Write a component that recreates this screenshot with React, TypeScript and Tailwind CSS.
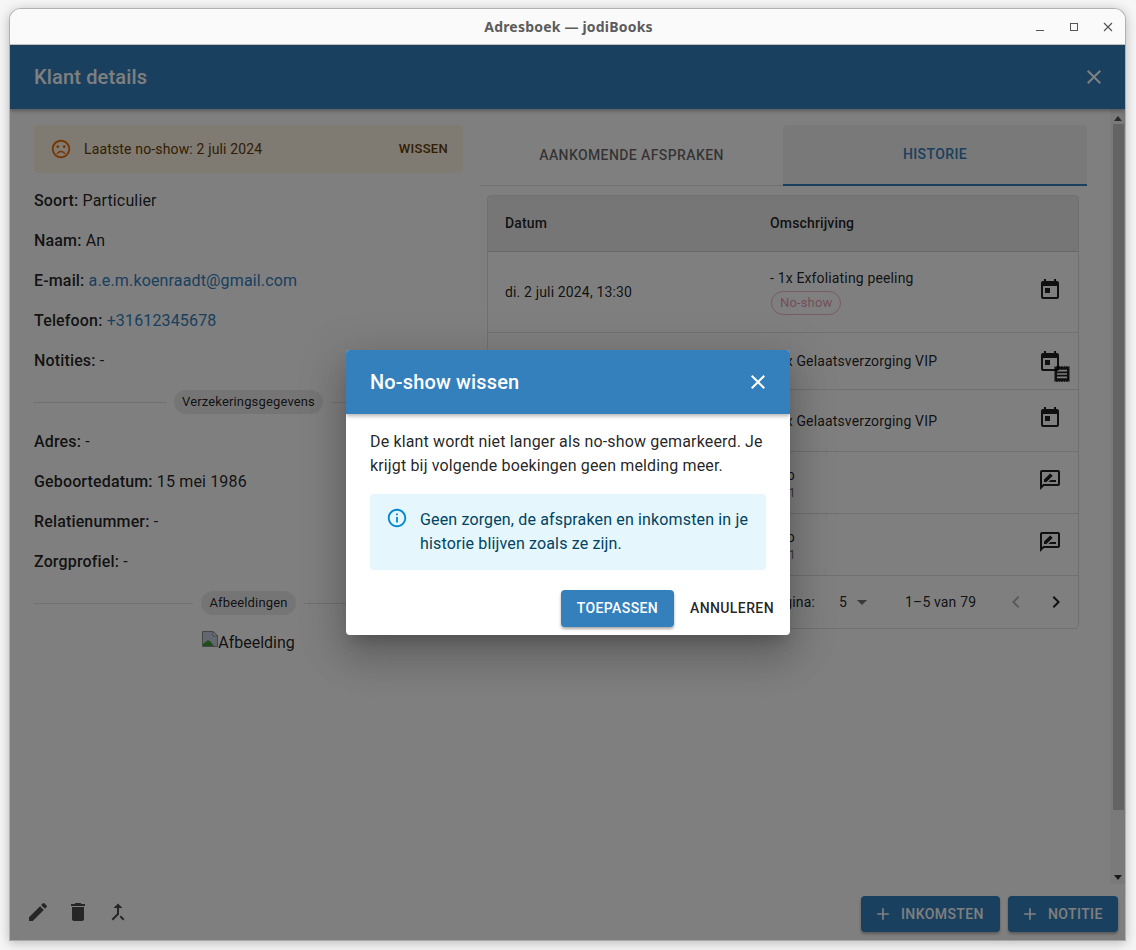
import React from 'react'

const paths = {
	today: 'M19 3h-1V1h-2v2H8V1H6v2H5c-1.11 0-1.99.9-1.99 2L3 19c0 1.1.89 2 2 2h14c1.1 0 2-.9 2-2V5c0-1.1-.9-2-2-2zm0 16H5V8h14v11zM7 10h5v5H7z',
	receipt: 'M18 17H6v-2h12v2zm0-4H6v-2h12v2zm0-4H6V7h12v2zM3 22l1.5-1.5L6 22l1.5-1.5L9 22l1.5-1.5L12 22l1.5-1.5L15 22l1.5-1.5L18 22l1.5-1.5L21 22V2l-1.5 1.5L18 2l-1.5 1.5L15 2l-1.5 1.5L12 2l-1.5 1.5L9 2 7.5 3.5 6 2 4.5 3.5 3 2v20z',
	review: 'M20 2H4c-1.1 0-2 .9-2 2v18l4-4h14c1.1 0 2-.9 2-2V4c0-1.1-.9-2-2-2zm0 14H5.17l-.59.59-.58.58V4h16v12zm-9.5-2H18v-2h-5.5zm3.86-5.87c.2-.2.2-.51 0-.71l-1.77-1.77c-.2-.2-.51-.2-.71 0L6 11.53V14h2.47l5.89-5.87z',
	edit: 'M3 17.25V21h3.75L17.81 9.94l-3.75-3.75L3 17.25zM20.71 7.04c.39-.39.39-1.02 0-1.41l-2.34-2.34a.9959.9959 0 0 0-1.41 0l-1.83 1.83 3.75 3.75 1.83-1.83z',
	trash: 'M6 19c0 1.1.9 2 2 2h8c1.1 0 2-.9 2-2V7H6v12zM19 4h-3.5l-1-1h-5l-1 1H5v2h14V4z',
	merge: 'M17 20.41 18.41 19 15 15.59 13.59 17 17 20.41zM7.5 8H11v5.59L5.59 19 7 20.41l6-6V8h3.5L12 3.5 7.5 8z',
	close: 'M19 6.41 17.59 5 12 10.59 6.41 5 5 6.41 10.59 12 5 17.59 6.41 19 12 13.41 17.59 19 19 17.59 13.41 12z',
	add: 'M19 13h-6v6h-2v-6H5v-2h6V5h2v6h6v2z',
	left: 'M15.41 7.41 14 6l-6 6 6 6 1.41-1.41L10.83 12z',
	right: 'M10 6 8.59 7.41 13.17 12l-4.58 4.59L10 18l6-6z',
	drop: 'M7 10l5 5 5-5z',
	sad: 'M12 14c-2.33 0-4.32 1.45-5.12 3.5h1.67c.69-1.19 1.97-2 3.45-2s2.75.81 3.45 2h1.67c-.8-2.05-2.79-3.5-5.12-3.5zm-.01-12C6.47 2 2 6.48 2 12s4.47 10 9.99 10C17.52 22 22 17.52 22 12S17.52 2 11.99 2zM12 20c-4.42 0-8-3.58-8-8s3.58-8 8-8 8 3.58 8 8-3.58 8-8 8zM15.5 8a1.5 1.5 0 1 0 0 3 1.5 1.5 0 0 0 0-3zM8.5 8a1.5 1.5 0 1 0 0 3 1.5 1.5 0 0 0 0-3z',
	info: 'M11 7h2v2h-2zm0 4h2v6h-2zm1-9C6.48 2 2 6.48 2 12s4.48 10 10 10 10-4.48 10-10S17.52 2 12 2zm0 18c-4.41 0-8-3.59-8-8s3.59-8 8-8 8 3.59 8 8-3.59 8-8 8z',
}

const Icon = ({ name, className }: { name: keyof typeof paths; className?: string }) => (
	<svg viewBox="0 0 24 24" fill="currentColor" className={className}>
		<path d={paths[name]} />
	</svg>
)

const Field = ({ label, value, link }: { label: string; value: string; link?: boolean }) => (
	<div className="h-6 mb-4 text-[16px] leading-6 tracking-[0.15px] text-black/[0.87] whitespace-nowrap">
		<span className="font-medium">{label}:</span>{' '}
		<span className={link ? 'text-[#3380bd]' : ''}>{value}</span>
	</div>
)

const Divider = ({ label }: { label: string }) => (
	<div className="pt-px mb-4">
		<div className="flex items-center gap-2 h-6">
			<div className="flex-1 h-px bg-black/[0.12]" />
			<div className="h-6 px-2 rounded-full bg-black/[0.08] text-[13px] leading-6 text-black/[0.87] tracking-[0.15px]">{label}</div>
			<div className="flex-1 h-px bg-black/[0.12]" />
		</div>
	</div>
)

const rows = [
	{ h: 'h-[81px]', icoY: '-mt-[4px]', date: 'di. 2 juli 2024, 13:30', desc: '- 1x Exfoliating peeling', chip: true, icon: 'today' },
	{ h: 'h-[57px]', icoY: 'mt-[1px]', date: 'di. 18 juni 2024, 10:00', desc: '- 1x Gelaatsverzorging VIP', icon: 'both' },
	{ h: 'h-[62px]', icoY: '-mt-[6px]', date: 'di. 4 juni 2024, 10:00', desc: '- 1x Gelaatsverzorging VIP', icon: 'today' },
	{ h: 'h-[62px] pt-px', icoY: '-mt-[7px]', date: 'ma. 3 juni 2024, 09:12', desc: 'Info', sub: 'Nr. 1', icon: 'review' },
	{ h: 'h-[62px] pt-px', icoY: '-mt-[7px]', date: 'ma. 3 juni 2024, 09:10', desc: 'Info', sub: 'Nr. 1', icon: 'review' },
]

export default function App() {
	return (
		<div className="w-[1136px] h-[950px] pt-2 pl-[9px] pr-[10px] pb-[9px] bg-[#f6f6f6] overflow-hidden" style={{ fontFamily: 'Roboto, sans-serif' }}>
			<div className="relative h-full flex flex-col rounded-t-[12px] overflow-hidden border border-[#b0b0b0] border-b-[#a8a8a8] bg-white shadow-[0_2px_12px_rgba(0,0,0,0.25)]">
				{/* title bar */}
				<div className="relative flex-none h-[36px] pl-[2px] bg-[#fafafa] border-b border-[#c8c8c8] flex items-center justify-center">
					<span className="text-[14px] font-bold tracking-[0.2px] text-[#5c5c5c]" style={{ fontFamily: '"Noto Sans", sans-serif' }}>Adresboek — jodiBooks</span>
					<div className="absolute right-0 top-0 h-full flex items-center text-[#555]">
						<div className="w-[34px] flex justify-center"><div className="w-2 h-px mt-[8px] bg-[#555]" /></div>
						<div className="w-[34px] flex justify-center"><div className="w-2 h-2 border border-[#555]" /></div>
						<div className="w-[34px] flex justify-center">
							<svg viewBox="0 0 10 10" className="w-[10px] h-[10px]" stroke="#555" strokeWidth="1.2"><path d="M1 1l8 8M9 1l-8 8" /></svg>
						</div>
					</div>
				</div>

				<div className="relative flex-1 min-h-0 flex flex-col">
					{/* app bar */}
					<div className="flex-none h-[64px] bg-[#3380bd] pl-6 pr-[19px] flex items-center justify-between shadow-[0_2px_4px_rgba(0,0,0,0.3)] z-10 text-white">
						<span className="text-[20px] font-medium tracking-[0.15px]">Klant details</span>
						<Icon name="close" className="w-6 h-6" />
					</div>

					<div className="flex-1 min-h-0 flex bg-white">
						{/* content */}
						<div className="flex-1 min-w-0 pt-4 pl-6 pr-4 flex gap-[17px]">
							<div className="w-[429px] flex-none">
								<div className="h-12 mb-4 rounded bg-[#fff4e5] pl-4 pr-[15px] flex items-center text-[#663c00]">
									<Icon name="sad" className="w-[22px] h-[22px] text-[#ed6c02]" />
									<span className="ml-[12px] text-[14px] tracking-[0.15px]">Laatste no-show: 2 juli 2024</span>
									<span className="ml-auto text-[13px] font-medium tracking-[0.3px]">WISSEN</span>
								</div>
								<Field label="Soort" value="Particulier" />
								<Field label="Naam" value="An" />
								<Field label="E-mail" value="a.e.m.koenraadt@gmail.com" link />
								<Field label="Telefoon" value="+31612345678" link />
								<Field label="Notities" value="-" />
								<Divider label="Verzekeringsgegevens" />
								<Field label="Adres" value="-" />
								<Field label="Geboortedatum" value="15 mei 1986" />
								<Field label="Relatienummer" value="-" />
								<Field label="Zorgprofiel" value="-" />
								<Divider label="Afbeeldingen" />
								<div className="flex justify-center items-start h-6 text-[16px] leading-6 text-black/[0.87]">
									<svg viewBox="0 0 16 16" className="w-4 h-4">
										<path d="M.5.5h10.5l4.5 4.5v10.5H.5z" fill="#c4cfe0" stroke="#8a8a8a" />
										<path d="M11 .5v4.5h4.5z" fill="#fff" stroke="#8a8a8a" />
										<path d="M1 15v-2l5-4 3 2 3 4z" fill="#3f9a3a" />
									</svg>
									<span>Afbeelding</span>
								</div>
							</div>

							<div className="w-[607px] flex-none">
								<div className="flex h-[61px] border-b border-black/[0.12]">
									<div className="w-[303px] flex items-center justify-center text-[14px] font-medium tracking-[0.4px] text-black/60">AANKOMENDE AFSPRAKEN</div>
									<div className="w-[304px] flex items-center justify-center text-[14px] font-medium tracking-[0.4px] text-[#3380bd] bg-black/[0.05] rounded-t border-b-2 border-[#3380bd] h-[61px]">HISTORIE</div>
								</div>
								<div className="mt-[9px] ml-[7px] w-[592px] border border-black/[0.12] rounded overflow-hidden">
									<div className="h-[56px] bg-black/[0.07] border-b border-black/[0.12] flex items-center text-[14px] font-medium text-black/[0.87] tracking-[0.15px]">
										<div className="w-[282px] pl-[17px] flex-none">Datum</div>
										<div>Omschrijving</div>
									</div>
									{rows.map((r, i) => (
										<div key={i} className={`${r.h} border-b border-black/[0.12] flex items-center text-[14px] text-black/[0.87] tracking-[0.15px]`}>
											<div className="w-[282px] pl-[17px] flex-none">{r.date}</div>
											<div className={`flex-1 min-w-0 ${r.chip ? 'pb-px' : ''}`}>
												<div className="leading-5">{r.desc}</div>
												{r.chip && (
													<div className="mt-[3px] ml-px w-fit h-6 px-2 rounded-full border border-[#d32f5f]/35 text-[13px] leading-[22px] text-[#d32f5f]/50">No-show</div>
												)}
												{r.sub && <div className="text-[12px] leading-4 text-black/60">{r.sub}</div>}
											</div>
											<div className={`relative w-6 h-6 mr-4 flex-none ${r.icoY}`}>
												{r.icon === 'review' ? <Icon name="review" className="w-6 h-6" /> : <Icon name="today" className="w-6 h-6" />}
												{r.icon === 'both' && <Icon name="receipt" className="absolute left-[14px] top-[14px] w-5 h-5" />}
											</div>
										</div>
									))}
									<div className="h-[52px] flex items-center text-[14px] text-black/[0.87] tracking-[0.15px]">
										<div className="w-[327px] text-right flex-none whitespace-nowrap">Rijen per pagina:</div>
										<span className="ml-6">5</span>
										<Icon name="drop" className="ml-[3px] w-6 h-6 text-black/55" />
										<span className="ml-[31px] w-[71px] whitespace-nowrap">1–5 van 79</span>
										<Icon name="left" className="ml-[28px] w-6 h-6 text-black/30" />
										<Icon name="right" className="ml-4 w-6 h-6" />
									</div>
								</div>
							</div>
						</div>
						{/* scrollbar */}
						<div className="flex-none w-[15px] flex flex-col items-center bg-black/[0.04]">
							<div className="h-[15px] flex items-center justify-center"><div className="w-0 h-0 border-x-[4px] border-x-transparent border-b-[5px] border-b-[#555] mt-1" /></div>
							<div className="h-[686px] w-[11px] ml-[2px] bg-[#c8c8c8]" />
							<div className="flex-1" />
							<div className="h-[14px] flex items-center justify-center"><div className="w-0 h-0 border-x-[4px] border-x-transparent border-t-[5px] border-t-[#333]" /></div>
						</div>
					</div>

					{/* footer */}
					<div className="flex-none h-[56px] bg-white flex items-center pl-4 pr-[7px] text-black/70">
						<Icon name="edit" className="w-6 h-6" />
						<Icon name="trash" className="ml-4 w-6 h-6" />
						<Icon name="merge" className="ml-4 w-6 h-6" />
						<div className="ml-auto mt-[4px] flex gap-2">
							<div className="h-9 w-[139px] pl-3 rounded bg-[#3380bd] text-white flex items-center gap-2 text-[14px] font-medium tracking-[0.4px] shadow-[0_2px_3px_rgba(0,0,0,0.3)]">
								<Icon name="add" className="w-5 h-5" />INKOMSTEN
							</div>
							<div className="h-9 w-[110px] pl-3 rounded bg-[#3380bd] text-white flex items-center gap-2 text-[14px] font-medium tracking-[0.4px] shadow-[0_2px_3px_rgba(0,0,0,0.3)]">
								<Icon name="add" className="w-5 h-5" />NOTITIE
							</div>
						</div>
					</div>

					{/* backdrop */}
					<div className="absolute inset-0 z-20 bg-black/50" />

					{/* dialog */}
					<div className="absolute z-30 left-[336px] top-[305px] w-[444px] h-[285px] rounded bg-white overflow-hidden shadow-[0_11px_15px_-7px_rgba(0,0,0,0.2),0_24px_38px_3px_rgba(0,0,0,0.14),0_9px_46px_8px_rgba(0,0,0,0.12)]">
						<div className="h-16 bg-[#3380bd] pl-6 pr-5 flex items-center justify-between text-white shadow-[0_2px_4px_rgba(0,0,0,0.3)]">
							<span className="text-[20px] font-medium tracking-[0.15px]">No-show wissen</span>
							<Icon name="close" className="w-6 h-6" />
						</div>
						<div className="px-6 pt-4">
							<p className="text-[16px] leading-6 tracking-[0.15px] text-black/[0.87]">De klant wordt niet langer als no-show gemarkeerd. Je krijgt bij volgende boekingen geen melding meer.</p>
							<div className="mt-4 h-[76px] rounded bg-[#e5f6fd] pl-4 pr-3 pt-[14px] flex text-[#014361]">
								<Icon name="info" className="flex-none -mt-px w-[22px] h-[22px] text-[#0288d1]" />
								<p className="ml-3 text-[16px] leading-6 tracking-[0.15px]">Geen zorgen, de afspraken en inkomsten in je historie blijven zoals ze zijn.</p>
							</div>
						</div>
						<div className="mt-5 pr-4 flex items-center justify-end gap-4">
							<div className="h-[37px] w-[113px] rounded bg-[#3380bd] text-white flex items-center justify-center text-[14px] font-medium tracking-[0.4px] shadow-[0_2px_3px_rgba(0,0,0,0.35)]">TOEPASSEN</div>
							<div className="text-[14px] font-medium tracking-[0.4px] text-black/[0.87]">ANNULEREN</div>
						</div>
					</div>
				</div>
			</div>
		</div>
	)
}
